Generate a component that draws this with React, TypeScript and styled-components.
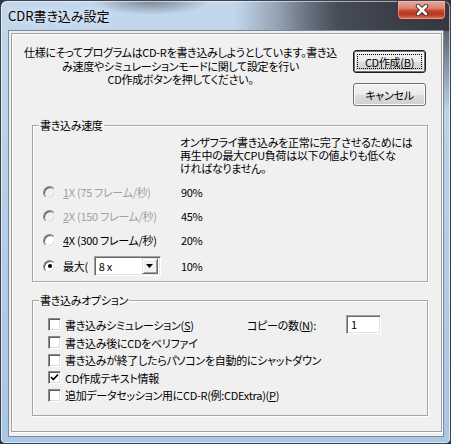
import React from 'react';
import styled, { createGlobalStyle, css } from 'styled-components';

const Global = createGlobalStyle`
  html, body { margin: 0; padding: 0; background: #2f333a; }
  body {
    width: 451px; height: 444px; overflow: hidden;
    font-family: "Noto Sans CJK JP", "Noto Sans", sans-serif;
    font-size: 11px; color: #000;
    letter-spacing: -0.3px;
    font-feature-settings: "palt" 1;
  }
  * { box-sizing: border-box; }
`;

const Window = styled.div`
  width: 451px;
  height: 444px;
  display: flex;
  flex-direction: column;
  border: 1px solid #3a4350;
  border-radius: 7px 7px 5px 5px;
  overflow: hidden;
  background:
    radial-gradient(ellipse 170px 110px at 100% 0%, rgba(48, 52, 60, 0.97), rgba(48, 52, 60, 0) 100%),
    linear-gradient(90deg, rgba(62, 66, 76, 0) 52%, rgba(62, 66, 76, 0.85) 75%, rgba(60, 64, 74, 0.95) 100%) top / 100% 30px no-repeat,
    radial-gradient(ellipse 60px 14px at 150px 0%, rgba(60, 66, 78, 0.55), rgba(60, 66, 78, 0) 100%),
    linear-gradient(180deg, #c3d7ec 0%, #b8cfe7 40%, #a9c6e4 100%);
  box-shadow: inset 0 0 0 1px rgba(255, 255, 255, 0.55);
`;

const TitleBar = styled.div`
  height: 29px;
  display: flex;
  align-items: flex-start;
  flex-shrink: 0;
`;

const Title = styled.div`
  margin: 6px 0 0 7px;
  font-size: 13px;
  letter-spacing: 0;
  line-height: 17px;
  color: #000;
  text-shadow: 0 0 6px rgba(255, 255, 255, 0.9);
  flex: 1;
`;

const CloseButton = styled.div`
  width: 49px;
  height: 19px;
  margin-right: 4px;
  display: flex;
  align-items: center;
  justify-content: center;
  border: 1px solid #50302c;
  border-top: none;
  border-radius: 0 0 5px 5px;
  background: linear-gradient(180deg, #e9a89a 0%, #d98572 40%, #c2412a 55%, #b8391f 75%, #d77a5e 100%);
  box-shadow: inset 0 0 0 1px rgba(255, 200, 190, 0.5);
`;

const Client = styled.div`
  flex: 1;
  margin: 0 6px 6px 7px;
  background: #f0f0f0;
  border: 1px solid #7d8896;
  display: flex;
  flex-direction: column;
`;

const Panel = styled.div`
  flex: 1;
  margin: 2px 1px 4px 2px;
  border: 1px solid #a0a0a0;
  box-shadow: inset 1px 1px 0 #ffffff, 1px 1px 0 #ffffff;
  display: flex;
  flex-direction: column;
`;

const TopRow = styled.div`
  display: flex;
  padding: 12px 0 0 12px;
`;

const Message = styled.div`
  width: 313px;
  text-align: center;
  line-height: 13.5px;
  white-space: nowrap;
`;

const ButtonColumn = styled.div`
  margin: 4px 0 0 16px;
  display: flex;
  flex-direction: column;
  gap: 10px;
`;

const Button = styled.div<{ $default?: boolean }>`
  position: relative;
  width: 73px;
  height: 23px;
  display: flex;
  align-items: center;
  justify-content: center;
  border: 1px solid #707070;
  border-radius: 3px;
  background: linear-gradient(180deg, #f2f2f2 0%, #ebebeb 50%, #dddddd 51%, #cfcfcf 100%);
  box-shadow: inset 0 0 0 1px #fcfcfc;
  ${(p) =>
    p.$default &&
    css`
      border-color: #1e1e1e;
      box-shadow: inset 0 0 0 1px #6f6f6f, inset 0 0 0 2px #fcfcfc;
      &::after {
        content: '';
        position: absolute;
        inset: 3px;
        border: 1px dotted #000;
      }
    `}
`;

const U = styled.span`
  text-decoration: underline;
  text-underline-offset: 1px;
`;

const Group = styled.fieldset<{ $top: number; $pt: number; $pb: number }>`
  margin: ${(p) => p.$top}px 0 0 20px;
  width: 396px;
  min-width: 0;
  padding: ${(p) => p.$pt}px 0 ${(p) => p.$pb}px 0;
  border: 1px solid #a6a6a6;
  box-shadow: inset 1px 1px 0 #ffffff, 1px 1px 0 #ffffff;
`;

const Legend = styled.legend`
  margin-left: 6px;
  padding: 0 1px;
  line-height: 14px;
`;

const Description = styled.div`
  margin-left: 147px;
  line-height: 13px;
  white-space: nowrap;
`;

const SpeedList = styled.div`
  margin-top: 5px;
  display: flex;
  flex-direction: column;
`;

const SpeedRow = styled.div<{ $gapTop?: number }>`
  height: 24px;
  margin-top: ${(p) => p.$gapTop ?? 0}px;
  padding-left: 10px;
  display: grid;
  grid-template-columns: 138px auto;
  align-items: center;
`;

const RadioLabel = styled.div<{ $disabled?: boolean }>`
  display: flex;
  align-items: center;
  gap: 7px;
  white-space: nowrap;
  color: ${(p) => (p.$disabled ? '#a0a0a0' : '#000')};
`;

const Radio = styled.span<{ $checked?: boolean; $disabled?: boolean }>`
  width: 13px;
  height: 13px;
  border-radius: 50%;
  border: 1px solid;
  border-color: #8a8a8a #f8f8f8 #f8f8f8 #8a8a8a;
  box-shadow: inset 1px 1px 0 #5a5a5a, inset -1px -1px 0 #dcdcdc;
  background: ${(p) => (p.$disabled ? '#f0f0f0' : '#ffffff')};
  display: flex;
  align-items: center;
  justify-content: center;
  flex-shrink: 0;
  &::after {
    content: '';
    width: 4px;
    height: 4px;
    border-radius: 50%;
    background: #000;
    display: ${(p) => (p.$checked ? 'block' : 'none')};
  }
`;

const Combo = styled.div`
  margin-left: -1px;
  width: 67px;
  height: 20px;
  display: flex;
  align-items: center;
  border: 1px solid;
  border-color: #a0a0a0 #ffffff #ffffff #a0a0a0;
  box-shadow: inset 1px 1px 0 #696969, inset -1px -1px 0 #e3e3e3;
  background: #fff;
  padding: 2px;
`;

const ComboText = styled.span`
  flex: 1;
  padding-left: 2px;
  line-height: 16px;
`;

const ComboArrow = styled.span`
  width: 16px;
  height: 16px;
  background: #f0f0f0;
  border: 1px solid;
  border-color: #e3e3e3 #696969 #696969 #e3e3e3;
  box-shadow: inset 1px 1px 0 #ffffff, inset -1px -1px 0 #a0a0a0;
  display: flex;
  align-items: center;
  justify-content: center;
`;

const OptionRow = styled.div<{ $h: number }>`
  height: ${(p) => p.$h}px;
  padding-left: 15px;
  display: flex;
  align-items: center;
  white-space: nowrap;
`;

const CheckLabel = styled.div<{ $width?: number }>`
  display: flex;
  align-items: center;
  gap: 4px;
  width: ${(p) => (p.$width ? `${p.$width}px` : 'auto')};
`;

const Check = styled.span`
  width: 13px;
  height: 13px;
  border: 1px solid;
  border-color: #8a8a8a #ffffff #ffffff #8a8a8a;
  box-shadow: inset 1px 1px 0 #5c5c5c, inset -1px -1px 0 #dcdcdc;
  background: #fff;
  display: flex;
  align-items: center;
  justify-content: center;
  flex-shrink: 0;
`;

const CopyLabel = styled.span`
  width: 99px;
`;

const NumberBox = styled.div`
  width: 35px;
  height: 19px;
  border: 1px solid;
  border-color: #a0a0a0 #ffffff #ffffff #a0a0a0;
  box-shadow: inset 1px 1px 0 #696969, inset -1px -1px 0 #e3e3e3;
  background: #fff;
  padding: 1px 0 0 4px;
  line-height: 15px;
`;

const CloseX = () => (
  <svg width="14" height="12" viewBox="0 0 14 12">
    <path d="M3 2 L11 10 M11 2 L3 10" stroke="#3a2220" strokeWidth="4.4" strokeLinecap="round" />
    <path d="M3 2 L11 10 M11 2 L3 10" stroke="#ffffff" strokeWidth="2.6" strokeLinecap="round" />
  </svg>
);

const CheckMark = () => (
  <svg width="9" height="9" viewBox="0 0 9 9">
    <path d="M1 4 L3.3 6.5 L8 1.5" fill="none" stroke="#000" strokeWidth="1.8" />
  </svg>
);

const DownArrow = () => (
  <svg width="7" height="4" viewBox="0 0 7 4">
    <path d="M0 0 H7 L3.5 4 Z" fill="#000" />
  </svg>
);

type Speed = { key: string; rest: string; pct: string; disabled?: boolean };

const speeds: Speed[] = [
  { key: '1', rest: 'X (75 フレーム/秒)', pct: '90%', disabled: true },
  { key: '2', rest: 'X (150 フレーム/秒)', pct: '45%', disabled: true },
  { key: '4', rest: 'X (300 フレーム/秒)', pct: '20%' },
];

const options: { label: React.ReactNode; checked?: boolean }[] = [
  { label: '書き込み後にCDをベリファイ' },
  { label: '書き込みが終了したらパソコンを自動的にシャットダウン' },
  { label: 'CD作成テキスト情報', checked: true },
  {
    label: (
      <>
        追加データセッション用にCD-R(例:CDExtra)(<U>P</U>)
      </>
    ),
  },
];

export default function App() {
  return (
    <>
      <Global />
      <Window>
        <TitleBar>
          <Title>CDR書き込み設定</Title>
          <CloseButton>
            <CloseX />
          </CloseButton>
        </TitleBar>
        <Client>
          <Panel>
            <TopRow>
              <Message>
                仕様にそってプログラムはCD-Rを書き込みしようとしています。書き込
                <br />
                み速度やシミュレーションモードに関して設定を行い
                <br />
                CD作成ボタンを押してください。
              </Message>
              <ButtonColumn>
                <Button $default>
                  CD作成(<U>B</U>)
                </Button>
                <Button>キャンセル</Button>
              </ButtonColumn>
            </TopRow>

            <Group $top={12} $pt={4} $pb={3}>
              <Legend>書き込み速度</Legend>
              <Description>
                オンザフライ書き込みを正常に完了させるためには
                <br />
                再生中の最大CPU負荷は以下の値よりも低くな
                <br />
                ければなりません。
              </Description>
              <SpeedList>
                {speeds.map((s) => (
                  <SpeedRow key={s.key}>
                    <RadioLabel $disabled={s.disabled}>
                      <Radio $disabled={s.disabled} />
                      <span>
                        <U>{s.key}</U>
                        {s.rest}
                      </span>
                    </RadioLabel>
                    <span>{s.pct}</span>
                  </SpeedRow>
                ))}
                <SpeedRow $gapTop={2}>
                  <RadioLabel>
                    <Radio $checked />
                    <span>最大(</span>
                    <Combo>
                      <ComboText>8 x</ComboText>
                      <ComboArrow>
                        <DownArrow />
                      </ComboArrow>
                    </Combo>
                  </RadioLabel>
                  <span>10%</span>
                </SpeedRow>
              </SpeedList>
            </Group>

            <Group $top={11} $pt={8} $pb={11}>
              <Legend>書き込みオプション</Legend>
              <OptionRow $h={19}>
                <CheckLabel $width={199}>
                  <Check />
                  <span>
                    書き込みシミュレーション(<U>S</U>)
                  </span>
                </CheckLabel>
                <CopyLabel>
                  コピーの数(<U>N</U>):
                </CopyLabel>
                <NumberBox>1</NumberBox>
              </OptionRow>
              {options.map((o, i) => (
                <OptionRow $h={17.5} key={i}>
                  <CheckLabel>
                    <Check>{o.checked && <CheckMark />}</Check>
                    <span>{o.label}</span>
                  </CheckLabel>
                </OptionRow>
              ))}
            </Group>
          </Panel>
        </Client>
      </Window>
    </>
  );
}
